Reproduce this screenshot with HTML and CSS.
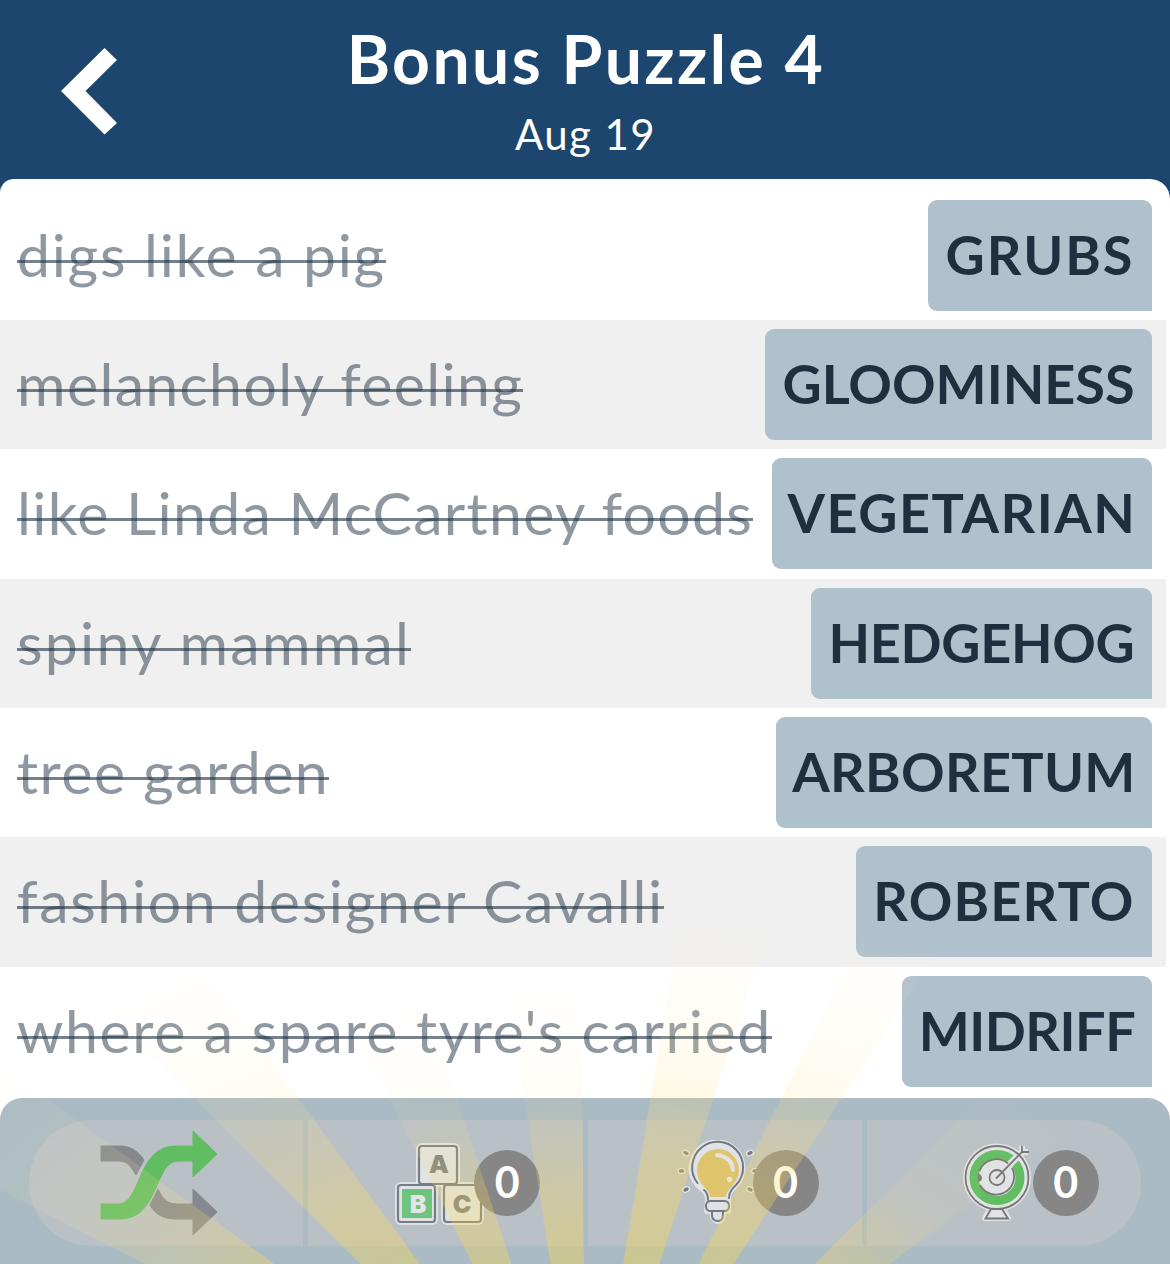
FILE: index.html
```html
<!DOCTYPE html>
<html lang="en">
<head>
<meta charset="utf-8">
<title>Bonus Puzzle 4</title>
<link rel="stylesheet" href="styles.css">
</head>
<body>
<div class="app">
  <header class="header">
    <button class="back" aria-label="Back">
      <svg width="56" height="88" viewBox="0 0 56 88"><path d="M43.500 1L56 13L24.500 44L56 76L43.500 87.500L0 44Z" fill="#fff"/></svg>
    </button>
    <div class="heading">
      <h1 class="title">Bonus Puzzle 4</h1>
      <p class="date">Aug 19</p>
    </div>
  </header>
  <main class="clues">
    <div class="row grubs"><del class="clue">digs like a pig</del><span class="answer">GRUBS</span></div>
    <div class="row gloominess"><del class="clue">melancholy feeling</del><span class="answer">GLOOMINESS</span></div>
    <div class="row vegetarian"><del class="clue">like Linda McCartney foods</del><span class="answer">VEGETARIAN</span></div>
    <div class="row hedgehog"><del class="clue">spiny mammal</del><span class="answer">HEDGEHOG</span></div>
    <div class="row arboretum"><del class="clue">tree garden</del><span class="answer">ARBORETUM</span></div>
    <div class="row roberto"><del class="clue">fashion designer Cavalli</del><span class="answer">ROBERTO</span></div>
    <div class="row midriff"><del class="clue">where a spare tyre's carried</del><span class="answer">MIDRIFF</span></div>
  </main>
  <footer class="toolbar">
    <div class="tools">
      <button class="tool shuffle" aria-label="Shuffle">
        <svg width="118" height="106" viewBox="0 0 118 106">
          <g fill="#85888d" stroke="#85888d" stroke-width="1" stroke-linejoin="round">
            <path d="M1 16H20C31 16 39 22 44 30L36 45C30 35 27 31 18 31H1Z"/>
            <path d="M58 59C63 70 68 74 78 74H93V59L117 82L93 105V89H76C63 89 55 84 50 75Z"/>
          </g>
          <path d="M1 74H18C42 74 36 16 76 16H93V1L117 24L93 47V31H78C54 31 60 89 20 89H1Z" fill="#61bd62" stroke="#61bd62" stroke-width="1" stroke-linejoin="round"/>
        </svg>
      </button>
      <button class="tool letters" aria-label="Letters">
        <svg width="90" height="86" viewBox="395 1141 90 86">
          <g fill="#dfe3e6" stroke="#dfe3e6" stroke-width="6">
            <rect x="419" y="1147" width="38" height="38" rx="3"/>
            <rect x="398" y="1186" width="37" height="37" rx="3"/>
            <rect x="444" y="1186" width="37" height="37" rx="3"/>
          </g>
          <g fill="none" stroke="#777b83" stroke-width="2.200">
            <rect x="419" y="1147" width="38" height="38" rx="3"/>
            <rect x="398" y="1186" width="37" height="37" rx="3"/>
            <rect x="444" y="1186" width="37" height="37" rx="3"/>
          </g>
          <rect x="402" y="1190" width="30" height="29" fill="#6cc47d"/>
          <g class="letter" text-anchor="middle">
            <text x="439" y="1174" fill="#7b7e80">A</text>
            <text x="418" y="1213.500" fill="#e2e6e6">B</text>
            <text x="462" y="1213.500" fill="#7b7e80">C</text>
          </g>
        </svg>
        <span class="badge">0</span>
      </button>
      <button class="tool hint" aria-label="Hint">
        <svg width="84" height="86" viewBox="677 1141 84 86">
          <path d="M708 1201C708 1192 703 1191 698 1186A25.500 25.500 0 1 1 736 1186C731 1191 728 1193 728 1201V1212H723Q723 1222 718 1222Q713 1222 712 1212H707Z" fill="#dfe3e6" stroke="#dfe3e6" stroke-width="6" stroke-linejoin="round"/>
          <path d="M710 1198C710 1190 697 1186 697 1171A21 21 0 0 1 739 1171C739 1184 726 1190 726 1198Z" fill="#dec56d"/>
          <g fill="none" stroke="#727984" stroke-width="2" stroke-linecap="round">
            <path d="M697.500 1184A25.500 25.500 0 1 1 736 1186Q729 1192 729 1199M704 1191Q708 1194 708 1201"/>
            <rect x="706" y="1202" width="23" height="10" rx="4.500"/>
            <path d="M712 1213V1216Q712 1222 718 1222Q723 1222 723 1216V1213"/>
          </g>
          <path d="M717 1156Q732 1158 733 1171" fill="none" stroke="#e4e5e1" stroke-width="4" stroke-linecap="round"/>
          <circle cx="729.500" cy="1180.500" r="2.700" fill="#e4e5e1"/>
          <g stroke="#dfe3e6" stroke-width="6" stroke-linecap="round"><path d="M685 1153.500L687 1154.500M680.500 1172H682.500M685 1191L687 1190M749 1154.500L751 1153.500M754 1172H756M749 1190L751 1191"/></g>
          <g stroke="#777b7e" stroke-width="3.400" stroke-linecap="round"><path d="M685 1153.500L687 1154.500M680.500 1172H682.500M685 1191L687 1190M749 1154.500L751 1153.500M754 1172H756M749 1190L751 1191"/></g>
        </svg>
        <span class="badge">0</span>
      </button>
      <button class="tool target" aria-label="Target">
        <svg width="70" height="84" viewBox="962 1143 70 84">
          <g fill="#dfe3e6" stroke="#dfe3e6" stroke-width="6" stroke-linejoin="round">
            <circle cx="997" cy="1179.500" r="31"/>
            <path d="M991 1210H1002L1008 1220H985ZM1014 1162L1022 1154V1148M1022 1154H1028"/>
          </g>
          <circle cx="997" cy="1179.500" r="23" fill="none" stroke="#61bd62" stroke-width="9"/>
          <path d="M1009 1167L1023 1153" stroke="#dfe3e6" stroke-width="7"/>
          <g fill="none" stroke="#777476" stroke-width="1.800">
            <circle cx="997" cy="1179.500" r="31.500"/>
            <path d="M979.500 1173A18 18 0 0 1 1008 1165.500M1012 1170A18 18 0 1 1 980 1187"/>
            <circle cx="997" cy="1179.500" r="7.500"/>
            <path d="M996 1180.500L1022 1154V1148M1022 1154H1029"/>
            <path d="M991 1211H1002L1008 1220.500H985.500Z"/>
          </g>
          <path d="M978 1175Q982 1177 982 1180Q982 1183 978 1184Z" fill="#758078"/>
        </svg>
        <span class="badge">0</span>
      </button>
    </div>
  </footer>
  <svg class="rays" width="1170" height="364" viewBox="0 900 1170 364" aria-hidden="true">
    <defs>
      <radialGradient id="glow" gradientUnits="userSpaceOnUse" cx="0" cy="0" r="600" gradientTransform="translate(586 1490) scale(1.4 1)">
        <stop offset=".38" stop-color="#ffd93e" stop-opacity=".38"/>
        <stop offset=".55" stop-color="#ffdc58" stop-opacity=".31"/>
        <stop offset=".68" stop-color="#ffe080" stop-opacity=".19"/>
        <stop offset=".76" stop-color="#ffe6a0" stop-opacity=".13"/>
        <stop offset=".88" stop-color="#ffecb0" stop-opacity=".07"/>
        <stop offset="1" stop-color="#ffecb0" stop-opacity="0"/>
      </radialGradient>
      <radialGradient id="glow-short" gradientUnits="userSpaceOnUse" cx="0" cy="0" r="520" gradientTransform="translate(586 1490) scale(1.3 1)">
        <stop offset=".43" stop-color="#ffd93e" stop-opacity=".38"/>
        <stop offset=".6" stop-color="#ffdc58" stop-opacity=".25"/>
        <stop offset=".75" stop-color="#ffe080" stop-opacity=".07"/>
        <stop offset="1" stop-color="#ffecb0" stop-opacity="0"/>
      </radialGradient>
    </defs>
    <g fill="url(#glow)">
      <path d="M586 1490L17 920L167 920Z"/>
      <path d="M586 1490L680 920L771 920Z"/>
      <path d="M586 1490L870 920L958 920Z"/>
    </g>
    <g fill="url(#glow)">
      <path d="M586 1490L-130 1123L-40 1036Z"/>
    </g>
    <g fill="url(#glow-short)">
      <path d="M586 1490L320 960L411 960Z"/>
      <path d="M586 1490L503 960L581 960Z"/>
      <path d="M586 1490L1061 1020L1217 1020Z"/>
    </g>
  </svg>
</div>
</body>
</html>
```
FILE: styles.css
```css
* { box-sizing: border-box; }
body { margin: 0; background: #fff; font-family: Lato, "Noto Sans", sans-serif; }
button { border: 0; padding: 0; background: none; font: inherit; }
.app { position: relative; width: 1170px; height: 1264px; display: flex; flex-direction: column; overflow: hidden; background: #1d466f; }
.header { height: 179px; display: grid; grid-template-columns: 61px 1fr 61px; flex: none; }
.back { width: 56px; height: 88px; margin: 47px 0 0 61px; }
.back svg { display: block; }
.heading { text-align: center; color: #fff; }
.title { margin: 19px 0 0; font-size: 66px; line-height: 80px; font-weight: 700; white-space: nowrap; letter-spacing: 2.400px; text-indent: 2px; }
.date { margin: 10px 0 0; font-size: 42px; line-height: 50px; letter-spacing: 1.400px; text-indent: 1px; }
.clues { height: 1085px; flex: none; padding-top: 11.500px; background: #fff; border-radius: 14px 20px 0 0; }
.row { height: 129.400px; width: 1166px; display: flex; align-items: flex-start; justify-content: space-between; padding: 9px 14px 0 17px; }
.row:nth-child(even) { background: #f0f0f0; }
.clue { margin-top: 15px; font-size: 59px; line-height: 80px; white-space: nowrap; color: rgba(32, 50, 68, .5); letter-spacing: var(--clue-track); text-decoration: none; background: linear-gradient(rgba(32, 50, 68, .62), rgba(32, 50, 68, .62)) 0 45px / 100% 3px no-repeat; }
.answer { width: var(--answer-width); height: 111px; padding-bottom: 2px; display: flex; align-items: center; justify-content: center; background: #b0c1ce; color: #1e3040; font-size: 54px; font-weight: 700; letter-spacing: var(--answer-track); border-radius: 9px 9px 0 9px; white-space: nowrap; }
.grubs { --clue-track: 1.700px; --answer-track: 2px; --answer-width: 224px; }
.gloominess { --clue-track: 1.350px; --answer-track: 0; --answer-width: 387px; }
.vegetarian { --clue-track: 1.280px; --answer-track: 1.500px; --answer-width: 380px; }
.hedgehog { --clue-track: 2.250px; --answer-track: -.300px; --answer-width: 341px; }
.arboretum { --clue-track: 1.450px; --answer-track: .300px; --answer-width: 376px; }
.roberto { --clue-track: 1.650px; --answer-track: 1.200px; --answer-width: 296px; }
.midriff { --clue-track: 1.650px; --answer-track: -.500px; --answer-width: 250px; }
.toolbar { height: 166px; flex: none; margin-top: -166px; padding: 22px 29px 18px; background: #abbbc4; border-radius: 22px 22px 0 0; }
.tools { display: grid; grid-template-columns: repeat(4, 1fr); gap: 5px; height: 126px; border-radius: 63px; overflow: hidden; }
.tool { display: flex; align-items: center; background: #bac1c6; }
.tool svg { flex: none; }
.shuffle { padding-left: 71px; }
.letters { padding-left: 87px; }
.hint { padding-left: 89px; }
.target { padding-left: 95px; }
.badge { width: 66px; height: 66px; padding-bottom: 3px; flex: none; display: flex; align-items: center; justify-content: center; border-radius: 50%; background: #868686; color: #fff; font-size: 43px; font-weight: 700; }
.letters .badge { margin-left: -11px; }
.hint .badge { margin-left: -8px; }
.target .badge { margin-left: 1px; }
.letter { font: 900 25px Inter, sans-serif; }
/* Sunburst glowing over the lower part of the board */
.rays { position: absolute; left: 0; bottom: 0; pointer-events: none; }
```
